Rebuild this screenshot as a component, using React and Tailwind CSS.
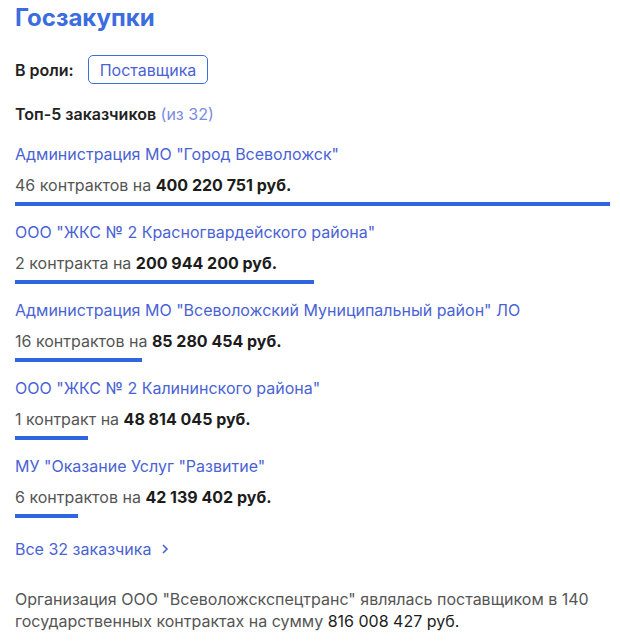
import React from 'react';

const customers = [
  { name: 'Администрация МО "Город Всеволожск"', count: '46 контрактов', sum: 400220751 },
  { name: 'ООО "ЖКС № 2 Красногвардейского района"', count: '2 контракта', sum: 200944200 },
  { name: 'Администрация МО "Всеволожский Муниципальный район" ЛО', count: '16 контрактов', sum: 85280454 },
  { name: 'ООО "ЖКС № 2 Калининского района"', count: '1 контракт', sum: 48814045 },
  { name: 'МУ "Оказание Услуг "Развитие"', count: '6 контрактов', sum: 42139402 },
];

const fmt = (n) => n.toString().replace(/\B(?=(\d{3})+(?!\d))/g, ' ');

const App = () => {
  const max = customers[0].sum;

  return (
    <div className="bg-white min-h-screen pl-[15px] pr-[10px] pt-[2px] font-['Inter','Liberation_Sans',sans-serif] text-[16px] text-[#2b2b2b]">
      <h2 className="text-[24px] font-bold text-[#3b6ce0] leading-[32px]">Госзакупки</h2>

      {/* Role */}
      <div className="flex items-center gap-[14px] mt-[21px]">
        <span className="font-semibold text-[#222]">В роли:</span>
        <span className="border border-[#3b6ce0] rounded-[5px] px-[11px] h-[29px] flex items-center text-[#4a63d4]">Поставщика</span>
      </div>

      <div className="mt-[17px] leading-[26px]">
        <span className="font-semibold text-[#222]">Топ-5 заказчиков</span>{' '}
        <span className="text-[#7b8be0]">(из 32)</span>
      </div>

      {/* Customers */}
      <div className="mt-[14px] flex flex-col">
        {customers.map((c) => (
          <div key={c.name} className="h-[78px]">
            <div className="text-[#4a63d4] leading-[26px]">{c.name}</div>
            <div className="leading-[26px] mt-[5px] text-[#555]">
              {c.count} на <span className="font-bold text-[#1c1c1c]">{fmt(c.sum)} руб.</span>
            </div>
            <div className="h-[4px] bg-[#2f66e0] mt-[4px]" style={{ width: `${(c.sum / max) * 100}%` }} />
          </div>
        ))}
      </div>

      <div className="mt-[5px] flex items-center gap-[10px] text-[#4a63d4] leading-[26px]">
        Все 32 заказчика
        <svg width="8" height="10" viewBox="0 0 8 10" fill="none" stroke="#4a63d4" strokeWidth="1.6">
          <path d="M2 1l4 4-4 4" />
        </svg>
      </div>

      <p className="mt-[26px] pr-[20px] text-[#555] leading-[22px]">
        Организация ООО "Всеволожскспецтранс" являлась поставщиком в 140 государственных контрактах на сумму{' '}
        <span className="text-[#1c1c1c]">816 008 427 руб.</span>
      </p>
    </div>
  );
};

export default App;
